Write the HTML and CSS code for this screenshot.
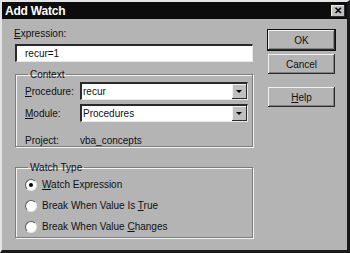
FILE: index.html
```html
<!DOCTYPE html>
<html lang="en">
<head>
    <meta charset="UTF-8">
    <title>Add Watch</title>
    <link rel="stylesheet" href="styles.css">
</head>
<body>
    <div class="window">
        <div class="titlebar">
            <span class="title">Add Watch</span>
            <span class="close-btn">&#x2715;</span>
        </div>

        <div class="dialog-body">
            <div class="main">
                <div class="field-label"><u>E</u>xpression:</div>
                <div class="textbox">recur=1</div>

                <fieldset class="group context">
                    <legend>Context</legend>
                    <div class="row">
                        <span class="row-label"><u>P</u>rocedure:</span>
                        <div class="combo">
                            <span class="combo-text">recur</span>
                            <span class="combo-arrow"></span>
                        </div>
                    </div>
                    <div class="row">
                        <span class="row-label"><u>M</u>odule:</span>
                        <div class="combo">
                            <span class="combo-text">Procedures</span>
                            <span class="combo-arrow"></span>
                        </div>
                    </div>
                    <div class="row project-row">
                        <span class="row-label">Project:</span>
                        <span class="project-name">vba_concepts</span>
                    </div>
                </fieldset>

                <fieldset class="group watch-type">
                    <legend>Watch Type</legend>
                    <div class="radio-row">
                        <span class="radio checked"></span>
                        <span><u>W</u>atch Expression</span>
                    </div>
                    <div class="radio-row">
                        <span class="radio"></span>
                        <span>Break When Value Is <u>T</u>rue</span>
                    </div>
                    <div class="radio-row">
                        <span class="radio"></span>
                        <span>Break When Value <u>C</u>hanges</span>
                    </div>
                </fieldset>
            </div>

            <div class="buttons">
                <button class="btn default">OK</button>
                <button class="btn">Cancel</button>
                <button class="btn help"><u>H</u>elp</button>
            </div>
        </div>
    </div>
</body>
</html>
```

FILE: styles.css
```css
/* Win95 style dialog */
body {
    margin: 0;
    padding: 0;
    background-color: #b4b4b4;
    font-family: "Liberation Sans", Arial, sans-serif;
    font-size: 10px;
    color: #111;
}

.window {
    width: 350px;
    height: 253px;
    box-sizing: border-box;
    background-color: #b4b4b4;
    border-top: 2px solid #e4e4e4;
    border-left: 2px solid #e4e4e4;
    border-right: 3px solid #1a1a1a;
    border-bottom: 3px solid #1a1a1a;
}

.titlebar {
    height: 17px;
    background-color: #0c0c0c;
    color: white;
    display: flex;
    justify-content: space-between;
    align-items: center;
    padding: 0 2px 0 3px;
}

.title {
    font-weight: bold;
    font-size: 12px;
    letter-spacing: -0.2px;
}

.close-btn {
    width: 14px;
    height: 12px;
    background-color: #c0c0c0;
    color: #000;
    font-size: 10px;
    font-weight: bold;
    line-height: 12px;
    text-align: center;
    box-shadow: inset -1px -1px #303030, inset 1px 1px #f0f0f0;
}

.dialog-body {
    display: flex;
    padding: 8px 0 0 13px;
}

.main {
    width: 238px;
}

.field-label {
    line-height: 13px;
    margin-left: -1px;
}

.textbox {
    margin-top: 4px;
    height: 18px;
    box-sizing: border-box;
    background-color: #fff;
    border-top: 2px solid #2a2a2a;
    border-left: 2px solid #2a2a2a;
    border-right: 1px solid #e8e8e8;
    border-bottom: 1px solid #e8e8e8;
    padding: 1px 0 0 8px;
    line-height: 13px;
}

.group {
    margin: 0;
    padding: 0;
    border: 1px solid #7c7c7c;
    box-shadow: inset 1px 1px #f4f4f4, 1px 1px #f4f4f4;
}

.group legend {
    padding: 0 2px;
    margin-left: 3px;
    line-height: 11px;
}

.context {
    margin-top: 7px;
    height: 78px;
    box-sizing: border-box;
    padding: 2px 4px 0 9px;
}

.row {
    display: flex;
    align-items: center;
    margin-bottom: 4px;
}

.row-label {
    width: 55px;
}

.combo {
    width: 168px;
    height: 18px;
    box-sizing: border-box;
    background-color: #fff;
    border-top: 2px solid #2a2a2a;
    border-left: 2px solid #2a2a2a;
    border-right: 1px solid #e8e8e8;
    border-bottom: 1px solid #e8e8e8;
    display: flex;
    justify-content: space-between;
    align-items: center;
}

.combo-text {
    padding-left: 1px;
}

.combo-arrow {
    width: 15px;
    height: 15px;
    box-sizing: border-box;
    background-color: #c0c0c0;
    box-shadow: inset -1px -1px #2a2a2a, inset 1px 1px #f0f0f0;
    position: relative;
}

.combo-arrow::after {
    content: "";
    position: absolute;
    left: 4px;
    top: 6px;
    border-left: 3px solid transparent;
    border-right: 3px solid transparent;
    border-top: 3px solid #000;
}

.project-row {
    margin-top: 13px;
}

.watch-type {
    margin-top: 15px;
    height: 76px;
    box-sizing: border-box;
    padding: 1px 0 0 9px;
}

.radio-row {
    display: flex;
    align-items: center;
    gap: 5px;
    height: 21px;
}

.radio {
    width: 12px;
    height: 12px;
    box-sizing: border-box;
    border-radius: 50%;
    background-color: #fff;
    border: 1px solid;
    border-color: #5a5a5a #eaeaea #eaeaea #5a5a5a;
    position: relative;
}

.radio.checked::after {
    content: "";
    position: absolute;
    left: 3px;
    top: 3px;
    width: 4px;
    height: 4px;
    border-radius: 50%;
    background-color: #000;
}

.buttons {
    display: flex;
    flex-direction: column;
    margin-left: 15px;
    padding-top: 3px;
}

.btn {
    width: 67px;
    height: 20px;
    margin-bottom: 4px;
    font-family: "Liberation Sans", Arial, sans-serif;
    font-size: 10px;
    color: #111;
    background-color: #b4b4b4;
    border: none;
    box-shadow: inset -1px -1px #2a2a2a, inset 1px 1px #f0f0f0, inset -2px -2px #808080;
    padding: 0;
}

.btn.default {
    box-shadow: 0 0 0 1px #111, inset -1px -1px #2a2a2a, inset 1px 1px #f0f0f0, inset -2px -2px #808080;
}

.btn.help {
    margin-top: 9px;
}
```
